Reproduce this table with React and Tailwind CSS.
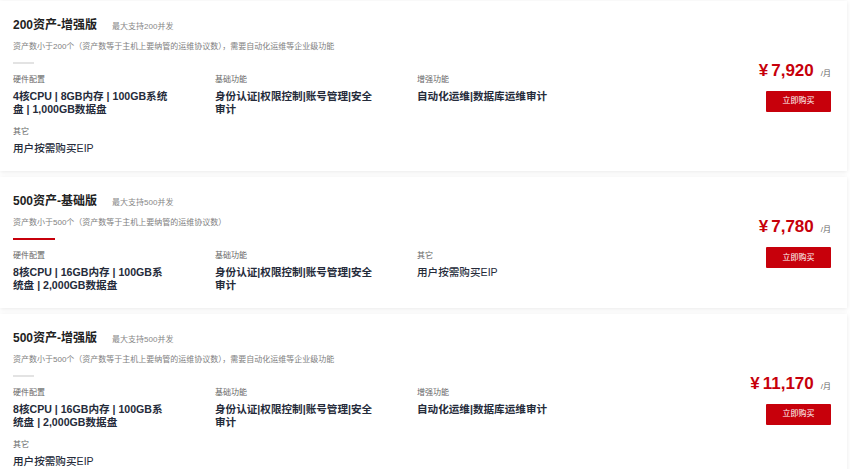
import React from 'react';

const plans = [
  {
    title: '200资产-增强版',
    sub: '最大支持200并发',
    desc: '资产数小于200个（资产数等于主机上要纳管的运维协议数），需要自动化运维等企业级功能',
    active: false,
    price: '7,920',
    specs: [
      { label: '硬件配置', value: '4核CPU | 8GB内存 | 100GB系统盘 | 1,000GB数据盘', bold: true },
      { label: '基础功能', value: '身份认证|权限控制|账号管理|安全审计', bold: true },
      { label: '增强功能', value: '自动化运维|数据库运维审计', bold: true },
      { label: '其它', value: '用户按需购买EIP', bold: false },
    ],
  },
  {
    title: '500资产-基础版',
    sub: '最大支持500并发',
    desc: '资产数小于500个（资产数等于主机上要纳管的运维协议数）',
    active: true,
    price: '7,780',
    specs: [
      { label: '硬件配置', value: '8核CPU | 16GB内存 | 100GB系统盘 | 2,000GB数据盘', bold: true },
      { label: '基础功能', value: '身份认证|权限控制|账号管理|安全审计', bold: true },
      { label: '其它', value: '用户按需购买EIP', bold: false },
    ],
  },
  {
    title: '500资产-增强版',
    sub: '最大支持500并发',
    desc: '资产数小于500个（资产数等于主机上要纳管的运维协议数），需要自动化运维等企业级功能',
    active: false,
    price: '11,170',
    specs: [
      { label: '硬件配置', value: '8核CPU | 16GB内存 | 100GB系统盘 | 2,000GB数据盘', bold: true },
      { label: '基础功能', value: '身份认证|权限控制|账号管理|安全审计', bold: true },
      { label: '增强功能', value: '自动化运维|数据库运维审计', bold: true },
      { label: '其它', value: '用户按需购买EIP', bold: false },
    ],
  },
];

const PlanCard = ({ plan }) => {
  return (
    <div className="w-[847px] bg-white shadow-[0_1px_5px_rgba(0,0,0,0.09)] flex items-center pl-[13px] pr-[16px] pt-[16px] pb-[16px]">
      {/* 左侧：标题、说明、配置 */}
      <div className="flex-1">
        <div className="flex items-baseline leading-[16px]">
          <span className="text-[12px] font-bold text-[#222]">{plan.title}</span>
          <span className="ml-[15px] text-[8px] text-[#888]">{plan.sub}</span>
        </div>
        <div className="mt-[6px] text-[8px] leading-[11px] text-[#808080]">{plan.desc}</div>
        <div
          className={
            plan.active
              ? 'mt-[10px] h-[2px] w-[42px] bg-[#c7000b]'
              : 'mt-[10px] h-[2px] w-[21px] bg-[#e3e3e3]'
          }
        />
        <div className="mt-[10px] grid grid-cols-[202px_202px_202px] gap-y-[10px]">
          {plan.specs.map((s, i) => (
            <div key={i} className="pr-[43px]">
              <div className="text-[8px] leading-[11px] text-[#666]">{s.label}</div>
              <div
                className={`mt-[5px] text-[10.6px] leading-[13px] text-[#252b3a] ${
                  s.bold ? 'font-bold' : 'font-medium'
                }`}
              >
                {s.value}
              </div>
            </div>
          ))}
        </div>
      </div>

      {/* 右侧：价格与购买 */}
      <div className="flex flex-col items-end">
        <div className="flex items-baseline">
          <span className="text-[17px] leading-[20px] font-bold text-[#c7000b]">¥</span>
          <span className="ml-[3px] text-[17px] leading-[20px] font-bold text-[#c7000b]">{plan.price}</span>
          <span className="ml-[7px] text-[8px] text-[#666]">/月</span>
        </div>
        <button className="mt-[10px] w-[65px] h-[21px] bg-[#c7000b] rounded-[1px] text-white text-[8px] flex items-center justify-center">
          立即购买
        </button>
      </div>
    </div>
  );
};

export default function App() {
  return (
    <div
      className="w-[850px] h-[469px] overflow-hidden bg-white pt-[1px] flex flex-col gap-[6px]"
      style={{ fontFamily: '"Liberation Sans", "Noto Sans CJK SC", sans-serif' }}
    >
      {plans.map((p, i) => (
        <PlanCard key={i} plan={p} />
      ))}
    </div>
  );
}
